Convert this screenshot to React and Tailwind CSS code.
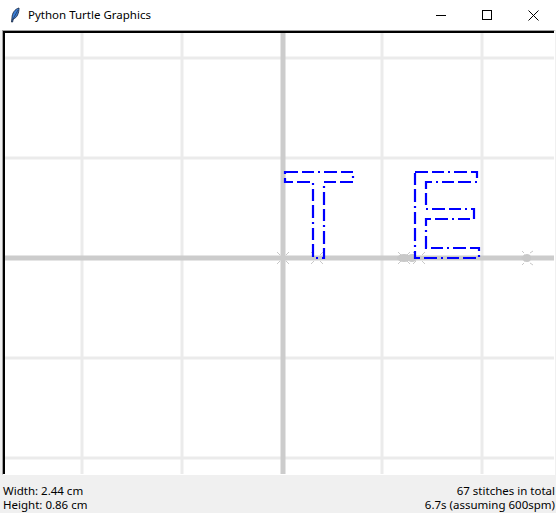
import React from 'react';

// page coordinates are used directly inside the canvas svg (viewBox offset)
const T_PATH = 'M285 172 L353 172 L353 182 L324 182 L324 258 L313 258 L313 182 L285 182 Z';
const E_PATH =
  'M415 172 L477 172 L477 182 L426 182 L426 209 L474 209 L474 219 L426 219 L426 248 L479 248 L479 258 L415 258 Z';

function Feather() {
  return (
    <svg width="10" height="16" viewBox="0 0 10 16">
      <path d="M9 1 C5 2 2 6 2 11 L1.5 15 L2.6 15 L3.2 12 C7 11 9 6 9 1 Z" fill="#3b7fd6" stroke="#1d2c4a" strokeWidth="0.9" />
      <path d="M8 3 L2.6 13" stroke="#1d2c4a" strokeWidth="0.7" />
    </svg>
  );
}

function Sparkle({ x, y }) {
  return (
    <g stroke="#c8c8c8" strokeWidth="1">
      <line x1={x - 6} y1={y - 6} x2={x - 3} y2={y - 3} />
      <line x1={x + 6} y1={y - 6} x2={x + 3} y2={y - 3} />
      <line x1={x - 6} y1={y + 6} x2={x - 3} y2={y + 3} />
      <line x1={x + 6} y1={y + 6} x2={x + 3} y2={y + 3} />
    </g>
  );
}

function TurtleCanvas() {
  const light = [82, 182, 382, 482];
  const lightY = [58, 158, 358, 458];
  return (
    <svg width="549" height="441" viewBox="5 33 549 441" className="block">
      <rect x="5" y="33" width="549" height="441" fill="#ffffff" />
      {light.map((x) => (
        <rect key={'v' + x} x={x - 1.5} y="33" width="3" height="441" fill="#ebebeb" />
      ))}
      {lightY.map((y) => (
        <rect key={'h' + y} x="5" y={y - 1.5} width="549" height="3" fill="#ebebeb" />
      ))}
      <rect x="280.5" y="33" width="5" height="441" fill="#cccccc" />
      <rect x="5" y="255.5" width="549" height="5" fill="#cccccc" />

      {/* turtle stamps along the baseline */}
      <Sparkle x={283} y={258} />
      <Sparkle x={317} y={258} />
      <ellipse cx="404" cy="258" rx="7" ry="4" fill="#c8c8c8" />
      <ellipse cx="412" cy="258" rx="5" ry="4" fill="#c8c8c8" />
      <Sparkle x={404} y={258} />
      <Sparkle x={419} y={258} />
      <ellipse cx="527" cy="258" rx="4" ry="4" fill="#c8c8c8" />
      <path d="M521 258 L525 254 L525 262 Z" fill="#c8c8c8" />
      <g stroke="#c8c8c8" strokeWidth="1">
        <line x1="530" y1="253" x2="533" y2="251" />
        <line x1="530" y1="263" x2="533" y2="265" />
        <line x1="524" y1="253" x2="522" y2="251" />
        <line x1="524" y1="263" x2="522" y2="265" />
      </g>

      {/* stitch outlines */}
      <g fill="none" stroke="#0000ff" strokeWidth="2.2" strokeDasharray="13 4 12 4 2 4" strokeLinecap="butt">
        <path d={T_PATH} />
        <path d={E_PATH} />
      </g>
    </svg>
  );
}

export default function App() {
  return (
    <div
      className="w-[556px] h-[513px] flex flex-col bg-[#f0f0f0] text-black overflow-hidden"
      style={{ fontFamily: '"Noto Sans", "Open Sans", sans-serif' }}
    >
      {/* title bar */}
      <div className="h-[30px] bg-white flex items-center shrink-0">
        <div className="w-[28px] flex justify-center pl-[1px]">
          <Feather />
        </div>
        <span className="text-[11.5px] leading-none mt-[-1px]">Python Turtle Graphics</span>
        <div className="ml-auto flex items-center h-full">
          <div className="w-[46px] h-full flex items-center justify-center">
            <div className="w-[10px] h-px bg-black" />
          </div>
          <div className="w-[46px] h-full flex items-center justify-center">
            <div className="w-[10px] h-[10px] border border-black" />
          </div>
          <div className="w-[46px] h-full flex items-center justify-center">
            <svg width="11" height="11" viewBox="0 0 11 11">
              <path d="M0.5 0.5 L10.5 10.5 M10.5 0.5 L0.5 10.5" stroke="#000" strokeWidth="1" />
            </svg>
          </div>
        </div>
      </div>

      {/* canvas frame */}
      <div className="ml-[2px] w-[553px] h-[445px] shrink-0 border-t border-l border-[#a0a0a0] border-r border-r-white border-b border-b-white">
        <div className="border-t-2 border-l-2 border-black">
          <TurtleCanvas />
        </div>
      </div>

      {/* status */}
      <div className="flex-1 flex justify-between pl-[3px] pr-[1px] pt-[9px] text-[11.5px] leading-[14px]">
        <div>
          <div>Width: 2.44 cm</div>
          <div>Height: 0.86 cm</div>
        </div>
        <div className="text-right">
          <div>67 stitches in total</div>
          <div>6.7s (assuming 600spm)</div>
        </div>
      </div>
    </div>
  );
}
